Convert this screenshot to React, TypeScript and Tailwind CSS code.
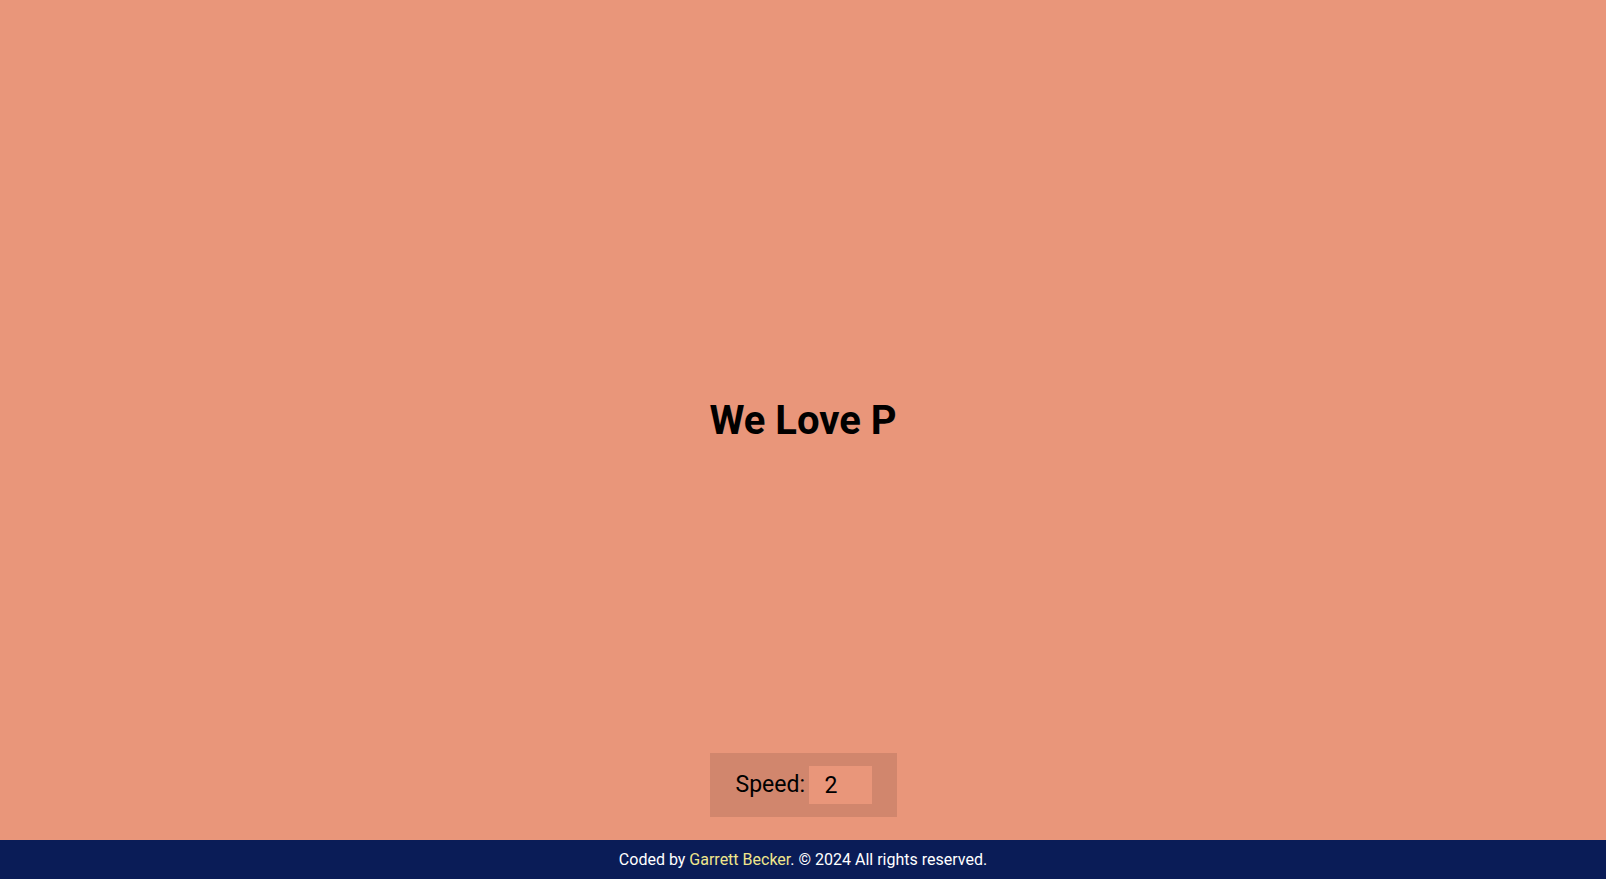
import { useState } from "react";

function SpeedControl() {
  const [speed, setSpeed] = useState("2");

  return (
    <div className="flex h-[64px] w-[187px] items-center bg-black/10 pl-[26px] pr-[25px]">
      <label className="text-[23px] font-normal text-black">Speed:</label>
      <input
        type="number"
        value={speed}
        onChange={(e) => setSpeed(e.target.value)}
        className="ml-auto h-[38px] w-[63px] bg-[#e9967a] pl-[16px] text-[23px] text-black outline-none [appearance:textfield] [&::-webkit-inner-spin-button]:appearance-none"
      />
    </div>
  );
}

export default function App() {
  return (
    <div className="flex h-screen flex-col bg-[#e9967a] font-['Roboto',sans-serif]">
      {/* MAIN */}
      <main className="flex flex-1 flex-col pt-[24px]">
        <div className="flex-1" />
        <h1 className="text-center text-[40px] font-bold leading-[48px] text-black">
          We Love P
        </h1>
        <div className="flex flex-1 items-end justify-center pb-[23px]">
          <SpeedControl />
        </div>
      </main>

      {/* FOOTER */}
      <footer className="flex h-[39px] items-center justify-center bg-[#0a1c57] text-[16px] text-white">
        <p>
          Coded by <span className="text-[#f0e68c]">Garrett Becker</span>. © 2024 All rights reserved.
        </p>
      </footer>
    </div>
  );
}
